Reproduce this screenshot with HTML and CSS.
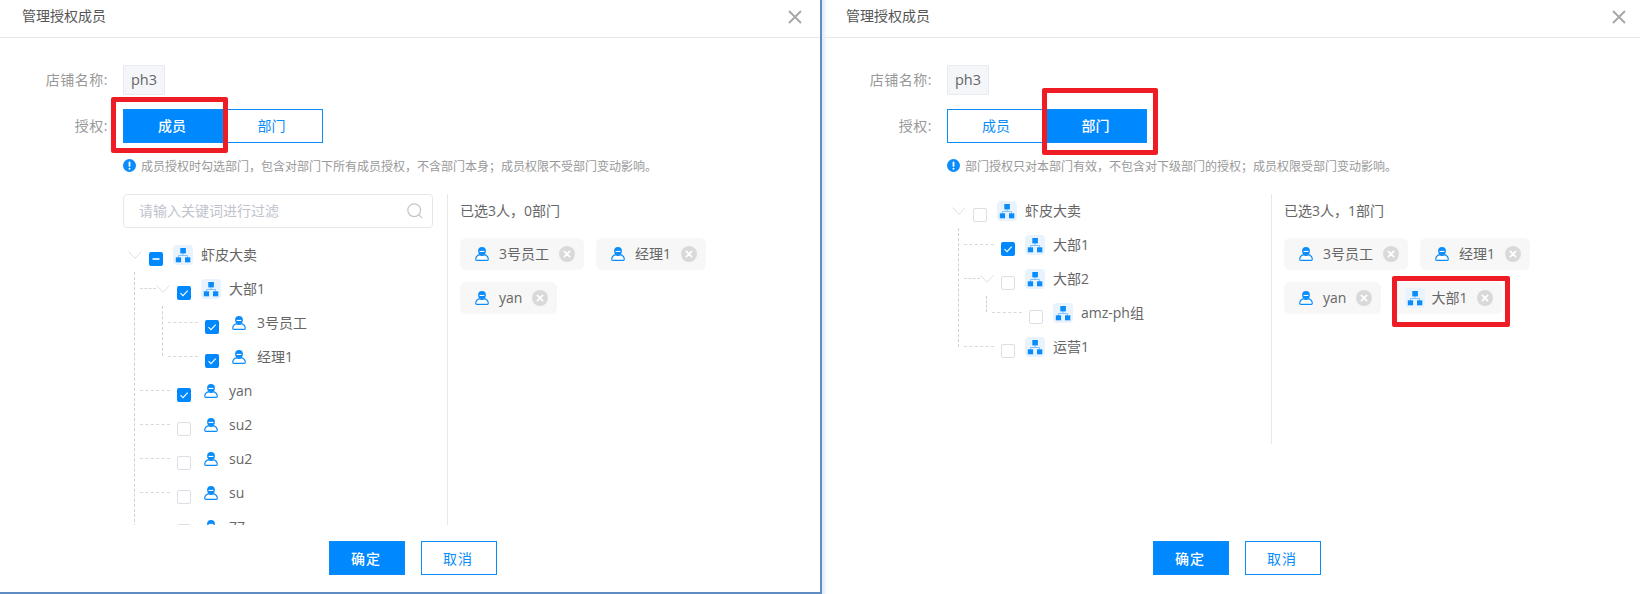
FILE: index.html
```html
<!DOCTYPE html>
<html lang="zh-CN">
<head>
<meta charset="utf-8">
<title>管理授权成员</title>
<link rel="stylesheet" href="styles.css">
</head>
<body>
<svg class="sprite" xmlns="http://www.w3.org/2000/svg">
  <symbol id="org" viewBox="0 0 20 20">
    <rect width="20" height="20" rx="4" fill="#e8f3fe"/>
    <path d="M10 8v2.5M5.5 12.5v-2h9v2" fill="none" stroke="#7fc2ff" stroke-width="1"/>
    <rect x="7.300" y="3" width="5.600" height="5.400" fill="#0a8cfb"/>
    <rect x="2.800" y="12.300" width="5.300" height="5" fill="#0a8cfb"/>
    <rect x="12" y="12.300" width="5.300" height="5" fill="#0a8cfb"/>
  </symbol>
  <symbol id="person" viewBox="0 0 14 14">
    <circle cx="7" cy="4" r="3.900" fill="#0a8cfb"/>
    <rect x="4.600" y="3.900" width="4.800" height="1.100" fill="#fff"/>
    <path d="M4.400 7.600C2.300 8.400.8 10.200.7 12.200c0 .7.4 1.100 1.100 1.100h10.400c.7 0 1.100-.4 1.100-1.100-.1-2-1.600-3.800-3.700-4.600-.7.900-4.500.9-5.200 0z" fill="#fff" stroke="#0a8cfb" stroke-width="1.200"/>
  </symbol>
  <symbol id="clear" viewBox="0 0 15 15">
    <circle cx="7.500" cy="7.500" r="7.500" fill="#d9d9d9"/>
    <path d="M4.600 4.600l5.800 5.800M10.400 4.600l-5.800 5.800" stroke="#fff" stroke-width="1.600" fill="none"/>
  </symbol>
  <symbol id="chev" viewBox="0 0 14 8">
    <path d="M.5.500L7 7.300 13.500.500" fill="none" stroke="#dcdfe6" stroke-width="1"/>
  </symbol>
  <symbol id="tick" viewBox="0 0 14 14">
    <path d="M3.500 7.200l2.500 2.400 4.700-4.900" fill="none" stroke="#fff" stroke-width="1.100"/>
  </symbol>
  <symbol id="dash" viewBox="0 0 14 14">
    <rect x="3.500" y="6.200" width="7" height="1.600" fill="#fff"/>
  </symbol>
  <symbol id="info" viewBox="0 0 13 13">
    <circle cx="6.500" cy="6.500" r="6.500" fill="#0a8cfb"/>
    <rect x="5.600" y="2.600" width="1.800" height="5.200" rx=".9" fill="#fff"/>
    <circle cx="6.500" cy="9.700" r="1" fill="#fff"/>
  </symbol>
</svg>

<main class="page">
  <section class="dialog dialog-first">
    <header class="head">
      <h2 class="head-title">管理授权成员</h2>
      <svg class="close" viewBox="0 0 14 14"><path d="M1 1l12 12M13 1L1 13"/></svg>
    </header>
    <div class="form">
      <div class="field">
        <span class="label">店铺名称:</span>
        <span class="value">ph3</span>
      </div>
      <div class="field field-tabs">
        <span class="label">授权:</span>
        <div class="tabs">
          <button class="tab tab-on">成员</button>
          <button class="tab">部门</button>
          <span class="mark mark-a"></span>
        </div>
      </div>
      <p class="hint"><svg class="hint-icon"><use href="#info"/></svg>成员授权时勾选部门，包含对部门下所有成员授权，不含部门本身；成员权限不受部门变动影响。</p>
      <div class="panels panels-tall">
        <div class="pick">
          <div class="search">
            <input class="search-input" placeholder="请输入关键词进行过滤">
            <svg class="search-icon" viewBox="0 0 16 16"><circle cx="7.200" cy="7.200" r="6.400"/><path d="M12 12l3.200 3.200"/></svg>
          </div>
          <div class="tree tree-search">
            <div class="row">
              <svg class="chev"><use href="#chev"/></svg>
              <span class="check check-on"><svg><use href="#dash"/></svg></span>
              <svg class="ico"><use href="#org"/></svg><span class="name">虾皮大卖</span>
            </div>
            <div class="kids kids-1">
              <div class="row lv1 has-chev">
                <svg class="chev"><use href="#chev"/></svg>
                <span class="check check-on"><svg><use href="#tick"/></svg></span>
                <svg class="ico"><use href="#org"/></svg><span class="name">大部1</span>
              </div>
              <div class="kids kids-2">
                <div class="row lv2">
                  <span class="chev"></span>
                  <span class="check check-on"><svg><use href="#tick"/></svg></span>
                  <span class="ico"><svg class="ico-p"><use href="#person"/></svg></span><span class="name">3号员工</span>
                </div>
                <div class="row lv2">
                  <span class="chev"></span>
                  <span class="check check-on"><svg><use href="#tick"/></svg></span>
                  <span class="ico"><svg class="ico-p"><use href="#person"/></svg></span><span class="name">经理1</span>
                </div>
              </div>
              <div class="row lv1">
                <span class="chev"></span>
                <span class="check check-on"><svg><use href="#tick"/></svg></span>
                <span class="ico"><svg class="ico-p"><use href="#person"/></svg></span><span class="name">yan</span>
              </div>
              <div class="row lv1">
                <span class="chev"></span>
                <span class="check"></span>
                <span class="ico"><svg class="ico-p"><use href="#person"/></svg></span><span class="name">su2</span>
              </div>
              <div class="row lv1">
                <span class="chev"></span>
                <span class="check"></span>
                <span class="ico"><svg class="ico-p"><use href="#person"/></svg></span><span class="name">su2</span>
              </div>
              <div class="row lv1">
                <span class="chev"></span>
                <span class="check"></span>
                <span class="ico"><svg class="ico-p"><use href="#person"/></svg></span><span class="name">su</span>
              </div>
              <div class="row lv1">
                <span class="chev"></span>
                <span class="check"></span>
                <span class="ico"><svg class="ico-p"><use href="#person"/></svg></span><span class="name">77</span>
              </div>
            </div>
          </div>
        </div>
        <div class="picked">
          <div class="picked-title">已选3人，0部门</div>
          <div class="chips">
            <span class="chip"><svg class="chip-ico"><use href="#person"/></svg>3号员工<svg class="chip-x"><use href="#clear"/></svg></span>
            <span class="chip"><svg class="chip-ico"><use href="#person"/></svg>经理1<svg class="chip-x"><use href="#clear"/></svg></span>
            <span class="chip"><svg class="chip-ico"><use href="#person"/></svg>yan<svg class="chip-x"><use href="#clear"/></svg></span>
          </div>
        </div>
      </div>
      <footer class="foot foot-near">
        <button class="btn btn-main">确定</button>
        <button class="btn">取消</button>
      </footer>
    </div>
  </section>

  <section class="dialog dialog-second">
    <header class="head">
      <h2 class="head-title">管理授权成员</h2>
      <svg class="close" viewBox="0 0 14 14"><path d="M1 1l12 12M13 1L1 13"/></svg>
    </header>
    <div class="form">
      <div class="field">
        <span class="label">店铺名称:</span>
        <span class="value">ph3</span>
      </div>
      <div class="field field-tabs">
        <span class="label">授权:</span>
        <div class="tabs">
          <button class="tab">成员</button>
          <button class="tab tab-on">部门</button>
          <span class="mark mark-b"></span>
        </div>
      </div>
      <p class="hint"><svg class="hint-icon"><use href="#info"/></svg>部门授权只对本部门有效，不包含对下级部门的授权；成员权限受部门变动影响。</p>
      <div class="panels panels-short">
        <div class="pick">
          <div class="tree">
            <div class="row">
              <svg class="chev"><use href="#chev"/></svg>
              <span class="check"></span>
              <svg class="ico"><use href="#org"/></svg><span class="name">虾皮大卖</span>
            </div>
            <div class="kids kids-1">
              <div class="row lv1">
                <span class="chev"></span>
                <span class="check check-on"><svg><use href="#tick"/></svg></span>
                <svg class="ico"><use href="#org"/></svg><span class="name">大部1</span>
              </div>
              <div class="row lv1 has-chev">
                <svg class="chev"><use href="#chev"/></svg>
                <span class="check"></span>
                <svg class="ico"><use href="#org"/></svg><span class="name">大部2</span>
              </div>
              <div class="kids kids-2">
                <div class="row lv2">
                  <span class="chev"></span>
                  <span class="check"></span>
                  <svg class="ico"><use href="#org"/></svg><span class="name">amz-ph组</span>
                </div>
              </div>
              <div class="row lv1">
                <span class="chev"></span>
                <span class="check"></span>
                <svg class="ico"><use href="#org"/></svg><span class="name">运营1</span>
              </div>
            </div>
          </div>
        </div>
        <div class="picked">
          <div class="picked-title">已选3人，1部门</div>
          <div class="chips">
            <span class="chip"><svg class="chip-ico"><use href="#person"/></svg>3号员工<svg class="chip-x"><use href="#clear"/></svg></span>
            <span class="chip"><svg class="chip-ico"><use href="#person"/></svg>经理1<svg class="chip-x"><use href="#clear"/></svg></span>
            <span class="chip"><svg class="chip-ico"><use href="#person"/></svg>yan<svg class="chip-x"><use href="#clear"/></svg></span>
            <span class="chip chip-org"><svg class="chip-ico-org"><use href="#org"/></svg>大部1<svg class="chip-x"><use href="#clear"/></svg><span class="mark mark-c"></span></span>
          </div>
        </div>
      </div>
      <footer class="foot foot-far">
        <button class="btn btn-main">确定</button>
        <button class="btn">取消</button>
      </footer>
    </div>
  </section>
</main>
</body>
</html>
```
FILE: styles.css
```css
* { box-sizing: border-box; }

html, body { margin: 0; padding: 0; }

body {
  width: 1640px;
  height: 594px;
  overflow: hidden;
  background: #fff;
  color: #666;
  font-family: "Open Sans", "Noto Sans CJK SC", sans-serif;
  font-size: 14px;
}

.sprite { display: none; }

.page { display: flex; width: 1640px; height: 594px; }

.dialog { height: 594px; overflow: hidden; }

.dialog-first {
  width: 822px;
  border-right: 2px solid #5f8dc3;
  border-bottom: 2px solid #5f8dc3;
}

.dialog-second {
  width: 818px;
  padding-left: 2px;
  background: linear-gradient(to right, #dbe8fa, #fff 5px);
}

.head {
  display: flex;
  align-items: center;
  justify-content: space-between;
  height: 38px;
  padding: 0 18px 3px 22px;
  border-bottom: 1px solid #e8e8e8;
}

.dialog-second .head { padding-right: 14px; }

.head-title {
  margin: 0 0 2px;
  font-size: 14px;
  font-weight: 400;
  line-height: 30px;
  color: #555;
}

.close {
  width: 14px;
  height: 14px;
  fill: none;
  stroke: #a8a8a8;
  stroke-width: 2;
}

.form { padding-top: 27px; }

.field { display: flex; align-items: center; height: 30px; }

.field-tabs { height: 34px; margin-top: 14px; }

.label {
  width: 108px;
  margin: 0 15px 2px 0;
  text-align: right;
  font-size: 14px;
  letter-spacing: 0.5px;
  color: #999;
}

.value {
  display: flex;
  align-items: center;
  justify-content: center;
  width: 42px;
  height: 30px;
  padding-bottom: 2px;
  background: #f4f6fa;
  border: 1px solid #e8ebf0;
  font-size: 14.500px;
  color: #666;
}

.tabs { position: relative; display: flex; }

.tab {
  width: 100px;
  height: 34px;
  padding: 0 2px 2px 0;
  background: #fff;
  border: 1px solid #0a8cfb;
  color: #0a8cfb;
  font-family: inherit;
  font-size: 14px;
}

.tab + .tab { border-left: 0; }

.tab-on {
  background: #0088ff;
  color: #fff;
  font-weight: 500;
}

.mark {
  position: absolute;
  border: 5px solid #ee1c25;
  border-radius: 2px;
}

.mark-a { left: -12px; top: -12px; width: 117px; height: 56px; }
.mark-b { left: 95px; top: -21px; width: 116px; height: 67px; }
.mark-c { left: -1px; top: -6px; width: 118px; height: 51px; }

.hint {
  display: flex;
  align-items: center;
  height: 18px;
  margin: 14px 0 0 123px;
  padding-bottom: 1px;
  font-size: 12px;
  color: #999;
}

.hint-icon { width: 13px; height: 13px; margin-right: 5px; }

.panels { display: flex; margin: 19px 0 0 123px; overflow: hidden; }
.panels-tall { height: 331px; }
.panels-short { height: 250px; }

.pick { width: 324px; }

.search {
  display: flex;
  align-items: center;
  width: 310px;
  height: 34px;
  padding: 0 9px 0 15px;
  border: 1px solid #e4e7ed;
  border-radius: 4px;
}

.search-input {
  flex: 1;
  min-width: 0;
  margin-bottom: 2px;
  padding: 0;
  border: 0;
  outline: 0;
  font-family: inherit;
  font-size: 14px;
}

.search-input::placeholder { color: #c0c4cc; opacity: 1; }

.search-icon {
  width: 16px;
  height: 16px;
  fill: none;
  stroke: #c4c6cc;
  stroke-width: 1.200;
}

.tree { position: relative; }
.tree-search { margin-top: 10px; }

.row {
  position: relative;
  display: flex;
  align-items: center;
  height: 34px;
}

.lv1 { padding-left: 28px; }
.lv2 { padding-left: 56px; }

.lv1::before, .lv2::before {
  content: "";
  position: absolute;
  top: 16px;
  width: 30px;
  border-top: 1px dashed #d8d8d8;
}

.lv1::before { left: 17px; }
.lv2::before { left: 45px; }
.has-chev::before { width: 16px; }

.kids { position: relative; }

.kids::before {
  content: "";
  position: absolute;
  top: 0;
  border-left: 1px dashed #d0d0d0;
}

.kids-1::before { left: 11px; bottom: 17px; }
.kids-2::before { left: 39px; bottom: 18px; }

.chev {
  flex: none;
  display: block;
  width: 14px;
  height: 8px;
  margin: 0 7px 0 5px;
}

.check {
  flex: none;
  width: 14px;
  height: 14px;
  margin: 8px 10px 0 0;
  background: #fff;
  border: 1px solid #dcdfe6;
  border-radius: 2px;
}

.check svg { display: block; width: 14px; height: 14px; }

.check-on { background: #0088ff; border: 0; }

.ico {
  flex: none;
  display: flex;
  justify-content: center;
  width: 20px;
  height: 20px;
  margin-right: 8px;
}

.ico-p { width: 14px; height: 14px; margin-top: 3px; }

.name { margin-top: -2px; white-space: nowrap; color: #666; }

.picked {
  flex: 1;
  padding-left: 12px;
  border-left: 1px solid #e8e8e8;
}

.picked-title { height: 34px; line-height: 33px; color: #666; }

.chips {
  display: flex;
  flex-wrap: wrap;
  gap: 12px;
  width: 300px;
  margin-top: 10px;
}

.chip {
  position: relative;
  display: flex;
  align-items: center;
  height: 32px;
  padding: 0 9.500px 0 15px;
  background: #f7f7f7;
  border-radius: 6px;
  color: #666;
  line-height: 30px;
  white-space: nowrap;
}

.chip-org { padding-left: 12px; padding-right: 9.500px; }

.chip-ico { width: 14px; height: 14px; margin-right: 10px; }
.chip-ico-org { width: 20px; height: 20px; margin-right: 6px; }
.chip-x { width: 16px; height: 16px; margin-left: 9.500px; }

.foot {
  display: flex;
  gap: 16px;
  padding-left: 329px;
}

.foot-near { margin-top: 16px; }
.foot-far { margin-top: 97px; }

.btn {
  width: 76px;
  height: 34px;
  padding: 0 2px 1px 0;
  background: #fff;
  border: 1px solid #0a8cfb;
  color: #0a8cfb;
  font-family: inherit;
  font-size: 14px;
  letter-spacing: 1px;
}

.btn-main {
  background: #0088ff;
  color: #fff;
  font-weight: 500;
}
```
